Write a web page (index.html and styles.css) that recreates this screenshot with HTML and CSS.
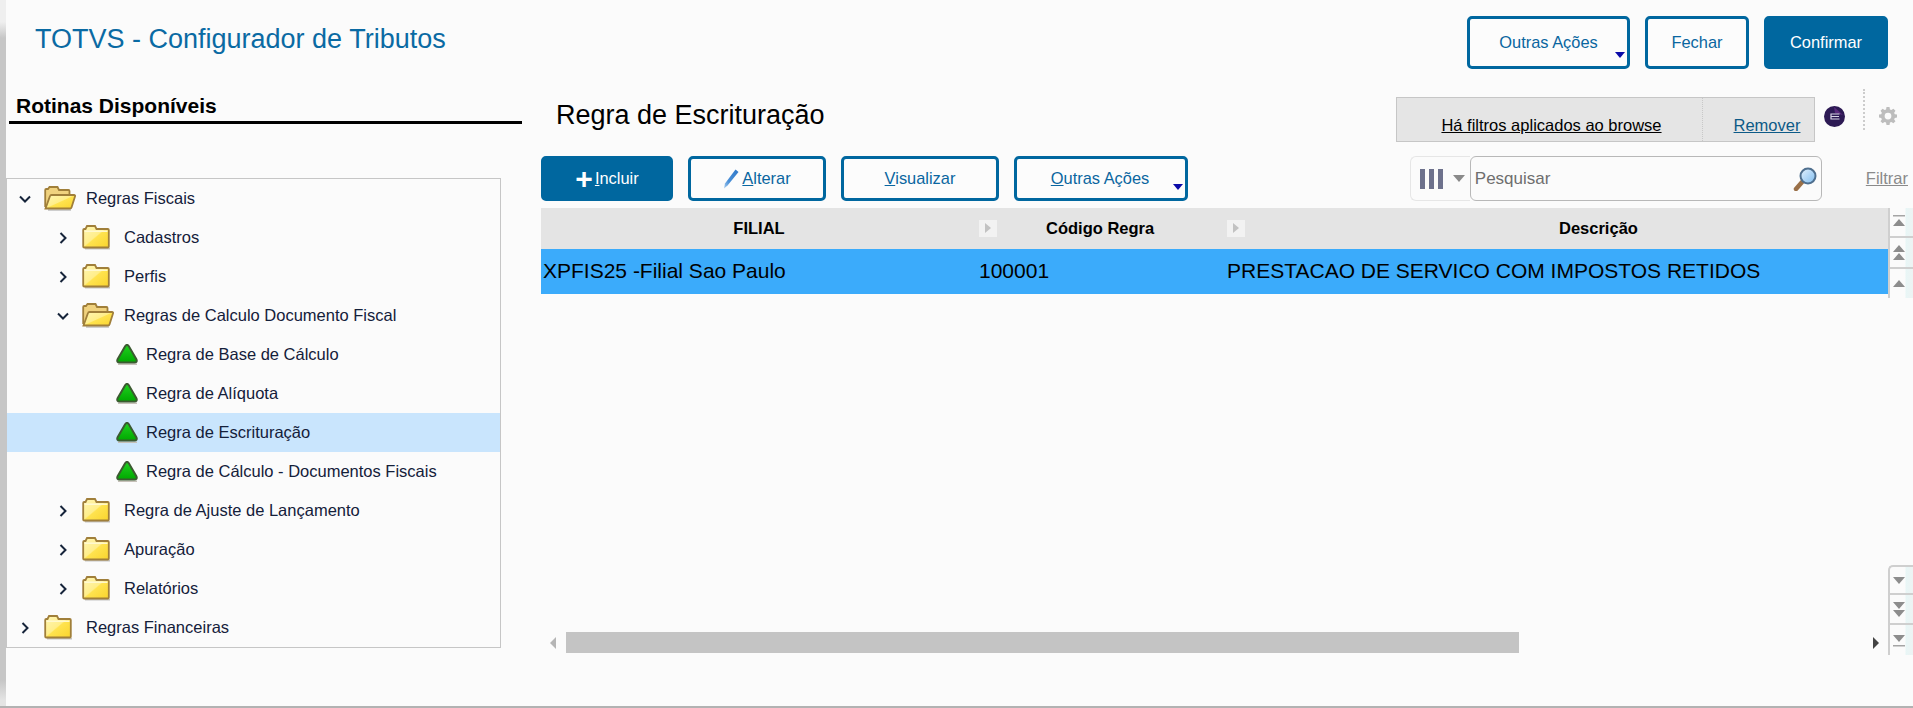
FILE: index.html
```html
<!DOCTYPE html>
<html lang="pt-BR">
<head>
<meta charset="utf-8">
<title>TOTVS - Configurador de Tributos</title>
<link rel="stylesheet" href="styles.css">
</head>
<body>
<svg class="defs" width="0" height="0" aria-hidden="true">
  <defs>
    <linearGradient id="fy" x1="0" y1="0" x2="1" y2="1">
      <stop offset="0" stop-color="#fff6b4"/><stop offset=".48" stop-color="#ffee8a"/><stop offset=".52" stop-color="#ffe34f"/><stop offset="1" stop-color="#f9d42c"/>
    </linearGradient>
    <linearGradient id="gr" x1="0" y1="0" x2="0" y2="1">
      <stop offset="0" stop-color="#20d020"/><stop offset="1" stop-color="#00a800"/>
    </linearGradient>
    <linearGradient id="lens" x1="0" y1="0" x2="1" y2="1">
      <stop offset="0" stop-color="#e4f2ff"/><stop offset="1" stop-color="#7fbcee"/>
    </linearGradient>
    <linearGradient id="pen" x1="0" y1="1" x2="1" y2="0">
      <stop offset="0" stop-color="#a9cdef"/><stop offset=".35" stop-color="#4a90d8"/><stop offset="1" stop-color="#2f78c8"/>
    </linearGradient>
    <symbol id="folder" viewBox="0 0 32 25">
      <path d="M3 23.700h25" stroke="#c4c4c4" stroke-width="1.600"/>
      <path d="M1.200 21.500V5q0-1 1-1h1.300l1.500-3h8l1.500 3h11.300q1 0 1 1v16.500q0 1-1 1H2.200q-1 0-1-1z" fill="url(#fy)" stroke="#a07f3a" stroke-width="1.800"/>
      <path d="M2.500 6.200h23" stroke="#fff9d2" stroke-width="1.500"/>
    </symbol>
    <symbol id="folder-open" viewBox="0 0 32 25">
      <path d="M4 24h23" stroke="#c4c4c4" stroke-width="1.600"/>
      <path d="M1.200 21V4q0-1 1-1h1.800l1.500-2h8l1.500 3h9.500q1 0 1 1v3" fill="#f0d27e" stroke="#a07f3a" stroke-width="1.800"/>
      <path d="M1.500 22.500 6 10q.3-1 1.500-1h22.500q1.500 0 1 1.500l-3.500 11q-.3 1-1.500 1H2.500z" fill="url(#fy)" stroke="#a07f3a" stroke-width="1.800"/>
    </symbol>
    <symbol id="tri" viewBox="0 0 22 21">
      <path d="M2 20.300h19" stroke="#c6c0b8" stroke-width="1.500"/>
      <path d="M9.300 2 1.500 15.500q-1 3 2 3h15q3 0 2-3L12.700 2q-1.700-2.200-3.400 0z" fill="url(#gr)" stroke="#3b5a30" stroke-width="2"/>
    </symbol>
    <symbol id="chev-r" viewBox="0 0 8 12"><path d="M1.500 1 6.500 6l-5 5" fill="none" stroke="#16243a" stroke-width="2"/></symbol>
    <symbol id="chev-d" viewBox="0 0 12 8"><path d="M1 1.500 6 6.500l5-5" fill="none" stroke="#16243a" stroke-width="2"/></symbol>
    <symbol id="up1" viewBox="0 0 14 14"><path d="M7 3 13 10H1z" fill="#8d8d8d"/></symbol>
    <symbol id="up2" viewBox="0 0 14 18"><path d="M7 1 13 8H1zM7 9l6 7H1z" fill="#8d8d8d"/></symbol>
    <symbol id="upe" viewBox="0 0 14 16"><path d="M1 1h12v1.500H1z" fill="#a5a5a5"/><path d="M7 5l6 7H1z" fill="#8d8d8d"/></symbol>
    <symbol id="down1" viewBox="0 0 14 14"><path d="M7 11 13 4H1z" fill="#8d8d8d"/></symbol>
    <symbol id="down2" viewBox="0 0 14 18"><path d="M7 9 13 2H1zM7 17l6-7H1z" fill="#8d8d8d"/></symbol>
    <symbol id="downe" viewBox="0 0 14 16"><path d="M7 10 13 3H1z" fill="#8d8d8d"/><path d="M1 13h12v1.500H1z" fill="#a5a5a5"/></symbol>
  </defs>
</svg>
<div class="app">
  <div class="strip"></div>
  <div class="main">
    <header class="topbar">
      <h1 class="app-title">TOTVS - Configurador de Tributos</h1>
      <div class="top-actions">
        <button class="btn btn-outline w-more-top">Outras Ações<span class="caret"></span></button>
        <button class="btn btn-outline w-close">Fechar</button>
        <button class="btn btn-fill w-confirm">Confirmar</button>
      </div>
    </header>
    <div class="content">
      <aside class="left">
        <h2 class="panel-title">Rotinas Disponíveis</h2>
        <ul class="tree">
          <li class="row l0"><svg class="chev-d"><use href="#chev-d"/></svg><svg class="ico-f"><use href="#folder-open"/></svg><span>Regras Fiscais</span></li>
          <li class="row l1"><svg class="chev-r"><use href="#chev-r"/></svg><svg class="ico-f"><use href="#folder"/></svg><span>Cadastros</span></li>
          <li class="row l1"><svg class="chev-r"><use href="#chev-r"/></svg><svg class="ico-f"><use href="#folder"/></svg><span>Perfis</span></li>
          <li class="row l1"><svg class="chev-d"><use href="#chev-d"/></svg><svg class="ico-f"><use href="#folder-open"/></svg><span>Regras de Calculo Documento Fiscal</span></li>
          <li class="row l2"><svg class="ico-t"><use href="#tri"/></svg><span>Regra de Base de Cálculo</span></li>
          <li class="row l2"><svg class="ico-t"><use href="#tri"/></svg><span>Regra de Alíquota</span></li>
          <li class="row l2 selected"><svg class="ico-t"><use href="#tri"/></svg><span>Regra de Escrituração</span></li>
          <li class="row l2"><svg class="ico-t"><use href="#tri"/></svg><span>Regra de Cálculo - Documentos Fiscais</span></li>
          <li class="row l1"><svg class="chev-r"><use href="#chev-r"/></svg><svg class="ico-f"><use href="#folder"/></svg><span>Regra de Ajuste de Lançamento</span></li>
          <li class="row l1"><svg class="chev-r"><use href="#chev-r"/></svg><svg class="ico-f"><use href="#folder"/></svg><span>Apuração</span></li>
          <li class="row l1"><svg class="chev-r"><use href="#chev-r"/></svg><svg class="ico-f"><use href="#folder"/></svg><span>Relatórios</span></li>
          <li class="row l0"><svg class="chev-r"><use href="#chev-r"/></svg><svg class="ico-f"><use href="#folder"/></svg><span>Regras Financeiras</span></li>
        </ul>
      </aside>
      <section class="right">
        <div class="right-head">
          <h2 class="page-title">Regra de Escrituração</h2>
          <div class="filter-box">
            <a class="filter-text">Há filtros aplicados ao browse</a>
            <a class="filter-remove">Remover</a>
          </div>
          <svg class="badge" viewBox="0 0 21 21">
            <circle cx="10.500" cy="10.500" r="10.500" fill="#2d1a54"/>
            <path d="M10 1 19 9 11 7z" fill="#5a2a7c"/>
            <path d="M15.500 8H7v5h8.500M7 10.500h8" fill="none" stroke="#d8d4e4" stroke-width="1.200"/>
          </svg>
          <span class="vdots"></span>
          <svg class="gear" viewBox="0 0 24 24">
            <path fill="#bdbdbd" fill-rule="evenodd" d="M10 1h4l.6 3.200 1.900.8L19.200 3.200 22 6l-1.800 2.700.8 1.900L24 11v4l-3 .6-.8 1.900L22 20l-2.800 2.800-2.700-1.800-1.900.8L14 25h-4l-.6-3.200-1.900-.8L4.800 22.800 2 20l1.800-2.500-.8-1.900L0 15v-4l3-.4.8-1.900L2 6l2.800-2.800L7.500 5l1.900-.8zM12 8.500a4.500 4.500 0 1 0 0 9 4.500 4.500 0 0 0 0-9z" transform="translate(0 -1)"/>
          </svg>
        </div>
        <div class="toolbar">
          <button class="btn btn-fill w-inc"><span class="plus">+</span><span><u>I</u>ncluir</span></button>
          <button class="btn btn-outline w-alt">
            <svg class="pencil" viewBox="0 0 16 20"><path d="M12.500 .5 15.500 3 4.500 16.500 1 19.500l1-5z" fill="url(#pen)"/></svg><span><u>A</u>lterar</span>
          </button>
          <button class="btn btn-outline w-vis"><span><u>V</u>isualizar</span></button>
          <button class="btn btn-outline w-more"><span><u>O</u>utras Ações</span><span class="caret"></span></button>
          <div class="search-group">
            <div class="col-picker">
              <span class="bars"><i></i><i></i><i></i></span><span class="col-caret"></span>
            </div>
            <div class="search">
              <span class="placeholder">Pesquisar</span>
              <svg class="magnifier" viewBox="0 0 24 24">
                <path d="M3 22 10 14" stroke="#9a7048" stroke-width="4.500" stroke-linecap="round"/>
                <circle cx="15" cy="9" r="7.500" fill="url(#lens)" stroke="#4f6f8e" stroke-width="2"/>
              </svg>
            </div>
            <a class="filter-link">Filtrar</a>
          </div>
        </div>
        <div class="grid-wrap">
          <div class="grid-main">
            <div class="grid-head">
              <div class="th th-a">FILIAL</div>
              <div class="th th-b"><span class="sort"></span><span>Código Regra</span></div>
              <div class="th th-c"><span class="sort"></span><span>Descrição</span></div>
            </div>
            <div class="grid-row">
              <div class="td td-a">XPFIS25 -Filial Sao Paulo</div>
              <div class="td td-b">100001</div>
              <div class="td td-c">PRESTACAO DE SERVICO COM IMPOSTOS RETIDOS</div>
            </div>
            <div class="hscroll">
              <span class="arrow-l"></span>
              <span class="thumb"></span>
              <span class="arrow-r"></span>
            </div>
          </div>
          <div class="vscroll">
            <div class="vgroup">
              <span class="vbtn h30"><svg class="v1"><use href="#upe"/></svg></span>
              <span class="vbtn h31"><svg class="v2"><use href="#up2"/></svg></span>
              <span class="vbtn h29"><svg class="v1"><use href="#up1"/></svg></span>
            </div>
            <div class="vgroup">
              <span class="vbtn h30 round"><svg class="v1"><use href="#down1"/></svg></span>
              <span class="vbtn h30"><svg class="v2"><use href="#down2"/></svg></span>
              <span class="vbtn h30"><svg class="v1"><use href="#downe"/></svg></span>
            </div>
          </div>
        </div>
      </section>
    </div>
  </div>
</div>
</body>
</html>
```
FILE: styles.css
```css
* { box-sizing: border-box; }
html, body { margin: 0; padding: 0; height: 100%; overflow: hidden; }
body { font-family: "Liberation Sans", Arial, sans-serif; background: #fbfbfb; color: #000; }
.defs { position: absolute; }
.app { display: flex; height: 708px; border-bottom: 2px solid #b2b2b2; background: #fbfbfb; }
.strip { width: 6px; flex: none; background: linear-gradient(#efefef 22px, #c6c6c6 38px, #c6c6c6 680px, #e4e4e4 700px); }
.main { flex: 1; min-width: 0; display: flex; flex-direction: column; }

.topbar { height: 89px; flex: none; display: flex; justify-content: space-between; padding: 16px 25px 0 29px; }
.app-title { margin: 7px 0 0; font-size: 27px; font-weight: 400; line-height: 32px; color: #0a6aa3; }
.top-actions { display: flex; gap: 15px; height: 53px; }

.btn { position: relative; display: flex; align-items: center; justify-content: center; height: 100%; border-radius: 5px; font: 16.400px "Liberation Sans", Arial, sans-serif; padding: 0; }
.btn-outline { background: #fcfcfc; border: 3px solid #00679f; color: #0a66a0; }
.btn-fill { background: #00679f; border: 3px solid #00679f; color: #fff; }
.w-more-top { width: 163px; }
.w-close { width: 104px; }
.w-confirm { width: 124px; }
.caret { position: absolute; right: 2px; bottom: 8px; width: 0; height: 0; border-left: 5px solid transparent; border-right: 5px solid transparent; border-top: 6px solid #0a0aa8; }

.content { flex: 1; display: grid; grid-template-columns: 535px 1fr; min-height: 0; }
.left { display: flex; flex-direction: column; }
.panel-title { margin: 0 0 54px 3px; width: 513px; height: 35px; border-bottom: 3px solid #000; padding: 5px 0 0 7px; font-size: 21px; line-height: 24px; font-weight: 700; }
.tree { list-style: none; margin: 0; padding: 0; width: 495px; height: 470px; border: 1px solid #c6c6c6; }
.row { height: 39px; display: flex; align-items: center; font-size: 16.500px; color: #14203a; }
.row.selected { background: #c9e5fd; }
.l0 { padding-left: 12px; }
.l1 { padding-left: 50px; }
.l2 { padding-left: 109px; }
.chev-r, .chev-d { width: 12px; height: 12px; flex: none; margin-right: 13px; }
.ico-f { width: 32px; height: 25px; flex: none; margin-right: 10px; }
.ico-t { width: 22px; height: 21px; flex: none; margin-right: 8px; }

.right { min-width: 0; display: flex; flex-direction: column; }
.right-head { height: 67px; flex: none; display: flex; padding-right: 16px; }
.page-title { margin: 0 auto 0 15px; padding-top: 11px; font-size: 27px; line-height: 30px; font-weight: 400; }
.filter-box { margin-top: 8px; width: 419px; height: 45px; display: flex; background: #e5e5e5; border: 1px solid #c6c6c6; font-size: 16.500px; }
.filter-text { width: 306px; height: 100%; border-right: 1px dotted #c8c8c8; text-align: center; text-decoration: underline; color: #000; line-height: 54px; padding-left: 4px; }
.filter-remove { flex: 1; height: 100%; text-align: center; text-decoration: underline; color: #0d5a87; line-height: 54px; padding-left: 17px; }
.badge { width: 21px; height: 21px; margin: 17px 0 0 9px; flex: none; }
.vdots { width: 0; height: 41px; border-left: 2px dotted #ccc; margin-left: 18px; flex: none; }
.gear { width: 18px; height: 18px; margin: 18px 0 0 14px; flex: none; }

.toolbar { height: 45px; flex: none; display: flex; gap: 15px; }
.w-inc { width: 132px; }
.w-alt { width: 138px; }
.w-vis { width: 158px; }
.w-more { width: 174px; padding-right: 2px; }
.plus { font-size: 30px; line-height: 20px; font-weight: 700; margin-right: 2px; }
.pencil { width: 16px; height: 20px; margin-right: 3px; }
.search-group { margin-left: auto; display: flex; align-items: stretch; padding-right: 5px; }
.col-picker { width: 60px; display: flex; align-items: center; padding-left: 9px; border: 1px solid #e6e6e6; border-right: 0; border-radius: 6px 0 0 6px; }
.bars { display: flex; gap: 4px; }
.bars i { display: block; width: 5px; height: 20px; background: #6d718c; }
.col-caret { margin-left: 10px; width: 0; height: 0; border-left: 6px solid transparent; border-right: 6px solid transparent; border-top: 7px solid #8a8a8a; }
.search { width: 352px; display: flex; align-items: center; justify-content: space-between; padding: 0 4px 0 4px; border: 1px solid #b8b8b8; border-radius: 6px; background: #fbfbfb; }
.placeholder { font-size: 17px; color: #6e6e6e; }
.magnifier { width: 24px; height: 24px; }
.filter-link { margin: 13px 0 0 44px; font-size: 16.500px; color: #8a8a8a; text-decoration: underline; }

.grid-wrap { margin-top: 7px; display: flex; align-items: flex-start; }
.grid-main { flex: 1; min-width: 0; }
.grid-head, .grid-row { display: grid; grid-template-columns: 438px 248px 1fr; }
.grid-head { height: 41px; background: #e4e4e4; font-size: 16.500px; font-weight: 700; align-items: center; text-align: center; }
.th { display: flex; align-items: center; justify-content: center; min-width: 0; }
.th-a { padding-right: 2px; }
.th-b { justify-content: flex-start; }
.th-c { justify-content: flex-start; }
.th-b span:last-child { margin-left: 49px; }
.th-c span:last-child { margin-left: 314px; }
.sort { position: relative; width: 18px; height: 17px; flex: none; background: #f2f2f2; }
.sort::after { content: ""; position: absolute; left: 6px; top: 3px; border-left: 6px solid #c2c2c2; border-top: 5px solid transparent; border-bottom: 5px solid transparent; }
.grid-row { height: 45px; background: #3babfb; font-size: 21px; align-items: center; padding-bottom: 2px; }
.td-a { padding-left: 2px; }
.hscroll { height: 21px; margin-top: 338px; display: flex; align-items: center; padding-left: 9px; padding-right: 9px; }
.arrow-l { width: 0; height: 0; border-right: 6px solid #b5b5b5; border-top: 6px solid transparent; border-bottom: 6px solid transparent; }
.thumb { width: 953px; height: 21px; margin-left: 10px; background: #c4c4c4; }
.arrow-r { margin-left: auto; width: 0; height: 0; border-left: 6px solid #444; border-top: 6px solid transparent; border-bottom: 6px solid transparent; }

.vscroll { width: 25px; flex: none; height: 447px; display: flex; flex-direction: column; justify-content: space-between; }
.vgroup { display: flex; flex-direction: column; }
.vbtn { display: flex; align-items: center; justify-content: center; padding-right: 5px; border-left: 2px solid #cfcfcf; border-bottom: 2px solid #cfcfcf; background: linear-gradient(90deg, #fbfbfb 15px, #e8f6f6 16px, #eef3f3 100%); }
.vgroup .vbtn:last-child { border-bottom: 0; }
.round { border-top: 2px solid #cfcfcf; border-top-left-radius: 5px; }
.h29 { height: 29px; }
.h30 { height: 30px; }
.h31 { height: 31px; }
.v1 { width: 14px; height: 16px; }
.v2 { width: 14px; height: 18px; }
```
